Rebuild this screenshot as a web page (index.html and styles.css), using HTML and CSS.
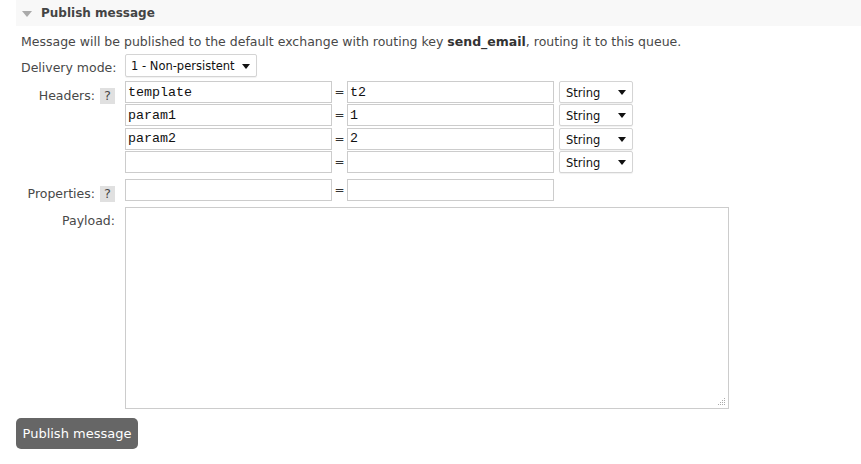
FILE: index.html
```html
<!DOCTYPE html>
<html>
<head>
<meta charset="utf-8">
<link rel="stylesheet" href="styles.css">
</head>
<body>
<div class="section">
  <h2 class="section-title"><span class="toggle"></span>Publish message</h2>
  <div class="section-body">
    <p class="intro">Message will be published to the default exchange with routing key <b>send_email</b>, routing it to this queue.</p>
    <div class="form">
      <div class="label">Delivery mode:</div>
      <div class="field">
        <span class="select-wrap mode"><select class="select"><option>1 - Non-persistent</option></select></span>
      </div>

      <div class="label label-help">Headers: <span class="help">?</span></div>
      <div class="field rows">
        <div class="kv"><input class="text" value="template"><span class="eq">=</span><input class="text" value="t2"><span class="select-wrap type"><select class="select"><option>String</option></select></span></div>
        <div class="kv"><input class="text" value="param1"><span class="eq">=</span><input class="text" value="1"><span class="select-wrap type"><select class="select"><option>String</option></select></span></div>
        <div class="kv"><input class="text" value="param2"><span class="eq">=</span><input class="text" value="2"><span class="select-wrap type"><select class="select"><option>String</option></select></span></div>
        <div class="kv"><input class="text" value=""><span class="eq">=</span><input class="text" value=""><span class="select-wrap type"><select class="select"><option>String</option></select></span></div>
      </div>

      <div class="label label-help">Properties: <span class="help">?</span></div>
      <div class="field props">
        <div class="kv"><input class="text" value=""><span class="eq">=</span><input class="text" value=""></div>
      </div>

      <div class="label">Payload:</div>
      <div class="field">
        <div class="payload-wrap">
          <textarea class="payload"></textarea>
          <svg class="grip" width="8" height="8" viewBox="0 0 8 8"><g fill="#aaa"><rect x="6" y="0" width="1" height="1"/><rect x="4" y="2" width="1" height="1"/><rect x="6" y="2" width="1" height="1"/><rect x="2" y="4" width="1" height="1"/><rect x="4" y="4" width="1" height="1"/><rect x="6" y="4" width="1" height="1"/><rect x="0" y="6" width="1" height="1"/><rect x="2" y="6" width="1" height="1"/><rect x="4" y="6" width="1" height="1"/><rect x="6" y="6" width="1" height="1"/></g></svg>
        </div>
      </div>
    </div>
  </div>
  <button class="btn">Publish message</button>
</div>
</body>
</html>
```

FILE: styles.css
```css
* { box-sizing: border-box; }
html, body { margin: 0; background: #fff; }
body {
  font-family: "DejaVu Sans", Verdana, sans-serif;
  font-size: 12.5px;
  color: #484848;
  width: 861px;
  height: 464px;
  overflow: hidden;
}
.section { padding-left: 16px; }
.section-title {
  margin: 0;
  height: 26px;
  background: #f8f8f8;
  font-size: 12px;
  font-weight: bold;
  color: #444;
  display: flex;
  align-items: center;
  padding-left: 6px;
}
.toggle {
  width: 0; height: 0;
  border-left: 5px solid transparent;
  border-right: 5px solid transparent;
  border-top: 6px solid #aaa;
  margin-right: 9px;
  margin-top: 1px;
}
.section-body { padding-left: 5px; }
.intro {
  margin: 8px 0 4px;
  line-height: 16px;
}
.intro b { color: #333; }
.form {
  display: grid;
  grid-template-columns: 94px 1fr;
  column-gap: 10px;
  row-gap: 4px;
}
.label {
  text-align: right;
  padding-top: 6px;
  line-height: 15px;
  white-space: nowrap;
}
.label-help { display: flex; justify-content: flex-end; align-items: flex-start; gap: 5px; padding-top: 7px; }
.help {
  display: inline-block;
  width: 15px; height: 16px;
  background: #e0e0e0;
  text-align: center;
  line-height: 16px;
  font-size: 13px;
  color: #484848;
}
.field { display: block; }
.rows { display: flex; flex-direction: column; gap: 1.34px; margin-bottom: 2px; }
.props { margin-bottom: 2px; }
.kv { display: flex; align-items: center; }
.text {
  width: 207px;
  height: 22px;
  border: 1px solid #ccc;
  padding: 0 2px;
  font-family: "Liberation Mono", "Courier New", monospace;
  font-size: 13.33px;
  color: #111;
  background: #fff;
  outline: none;
  margin: 0;
}
.eq {
  width: 15px;
  text-align: center;
  font-size: 12px;
  color: #333;
}
.select-wrap { position: relative; display: inline-block; }
.select-wrap::after {
  content: "";
  position: absolute;
  top: 50%;
  right: 7px;
  margin-top: -2px;
  border-left: 4px solid transparent;
  border-right: 4px solid transparent;
  border-top: 5px solid #111;
  pointer-events: none;
}
.select {
  -webkit-appearance: none;
  appearance: none;
  display: block;
  border: 1px solid #d4d4d4;
  border-radius: 2px;
  box-shadow: 0 1px 1px rgba(0,0,0,0.06);
  background: #fff;
  font-family: "DejaVu Sans", Verdana, sans-serif;
  font-size: 11.5px;
  color: #111;
  margin: 0;
  outline: none;
}
.mode .select { width: 132px; height: 23px; padding: 0 0 0 5px; }
.type { margin-left: 5px; }
.type .select { width: 74px; height: 22px; padding: 2px 0 0 6px; }
.payload-wrap { position: relative; width: 604px; height: 202px; }
.payload {
  display: block;
  width: 604px;
  height: 202px;
  border: 1px solid #ccc;
  margin: 0;
  resize: none;
  outline: none;
}
.grip { position: absolute; right: 3px; bottom: 3px; }
.btn {
  margin-top: 9px;
  width: 122px;
  height: 31px;
  background: #666;
  color: #fff;
  border: none;
  border-radius: 5px;
  font-family: "DejaVu Sans", Verdana, sans-serif;
  font-size: 13px;
  padding: 0;
  cursor: pointer;
}
```
